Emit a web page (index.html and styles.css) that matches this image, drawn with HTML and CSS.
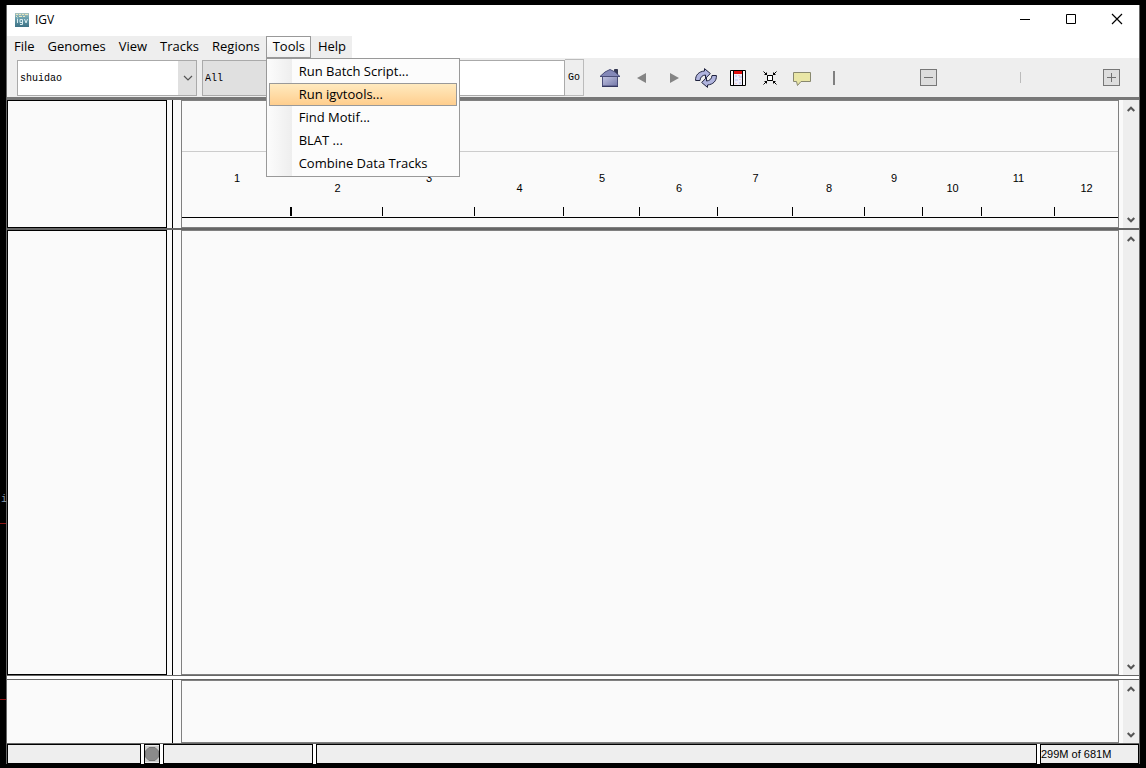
FILE: index.html
```html
<!DOCTYPE html>
<html lang="en">
<head>
<meta charset="utf-8">
<title>IGV</title>
<link rel="stylesheet" href="styles.css">
</head>
<body>
<svg class="defs" width="0" height="0" aria-hidden="true">
  <symbol id="up" viewBox="0 0 8 6"><path d="M.7 5 4 1.700l3.300 3.300" fill="none" stroke="#555" stroke-width="2"/></symbol>
  <symbol id="down" viewBox="0 0 8 6"><path d="M.7 1 4 4.300 7.300 1" fill="none" stroke="#555" stroke-width="2"/></symbol>
</svg>
<span class="stray">i</span>
<i class="mark mark-a"></i>
<i class="mark mark-b"></i>
<div class="window">
  <header class="titlebar">
    <svg class="logo" width="14" height="14" viewBox="0 0 14 14">
      <defs><linearGradient id="lg" x2="0" y2="1"><stop offset="0" stop-color="#a9c4c0"/><stop offset=".35" stop-color="#6aa0ae"/><stop offset="1" stop-color="#3d7285"/></linearGradient></defs>
      <rect width="14" height="14" fill="url(#lg)"/>
      <path d="M1 1.500h2m1 0h2m1 0h2m1 0h3M1 3.500h1m2 0h3m1 0h2" stroke="#e8e6c0"/>
      <path d="M2.500 6v4M2.500 4.500v.8M5 6.500h2.500v5H5M5 6.500v3h2.500M9.500 6l1.500 4 1.500-4" fill="none" stroke="#d8ecf0"/>
    </svg>
    <h1 class="title">IGV</h1>
    <div class="controls">
      <button class="control" aria-label="Minimize"><svg width="12" height="12"><path d="M1 6.500h10" stroke="#000"/></svg></button>
      <button class="control" aria-label="Maximize"><svg width="12" height="12"><path d="M1.500 1.500h9v9h-9z" fill="none" stroke="#000"/></svg></button>
      <button class="control" aria-label="Close"><svg width="12" height="12"><path d="M1 1l10 10M11 1 1 11" stroke="#000" stroke-width="1.200"/></svg></button>
    </div>
  </header>
  <nav class="menubar">
    <ul class="menus">
      <li><button class="menu">File</button></li>
      <li><button class="menu">Genomes</button></li>
      <li><button class="menu">View</button></li>
      <li><button class="menu">Tracks</button></li>
      <li><button class="menu">Regions</button></li>
      <li class="open"><button class="menu active" aria-expanded="true">Tools</button>
        <div class="dropdown">
          <button class="item">Run Batch Script...</button>
          <button class="item selected">Run igvtools...</button>
          <button class="item">Find Motif...</button>
          <button class="item">BLAT ...</button>
          <button class="item">Combine Data Tracks</button>
        </div>
      </li>
      <li><button class="menu">Help</button></li>
    </ul>
  </nav>
  <div class="toolbar">
    <div class="combo genome">
      <select aria-label="Genome"><option>shuidao</option></select>
      <svg class="chevron" width="10" height="6"><path d="M1 1l4 4 4-4" fill="none" stroke="#555" stroke-width="1.200"/></svg>
    </div>
    <div class="combo chromosome">
      <select aria-label="Chromosome"><option>All</option></select>
    </div>
    <input class="locus" type="text" aria-label="Locus">
    <button class="go">Go</button>
    <div class="tools">
      <button class="tool" aria-label="Home"><svg width="22" height="20" viewBox="0 0 22 20">
        <defs><linearGradient id="hg" x2="1" y2="1"><stop offset="0" stop-color="#c2c4e2"/><stop offset="1" stop-color="#7478a8"/></linearGradient></defs>
        <path d="M3.500 8.500h15v9.500h-15z" fill="url(#hg)" stroke="#4a4d78"/>
        <path d="M15.500 5V1.500h3V7" fill="#333653" stroke="#33364f"/>
        <path d="M1 8.500 6 4l5-2.500L16 4l5 4.500z" fill="#8488b8" stroke="#4a4d78"/>
        <path d="M3 18.500h16" stroke="#34375f"/></svg></button>
      <button class="tool" aria-label="Back"><svg width="10" height="10"><path d="M9 0v10L0 5z" fill="#848484"/></svg></button>
      <button class="tool" aria-label="Forward"><svg width="10" height="10"><path d="M1 0v10l9-5z" fill="#848484"/></svg></button>
      <button class="tool" aria-label="Refresh"><svg width="22" height="20" viewBox="0 0 22 20">
        <g fill="#b0b4de" stroke="#20233f"><path d="M.6 12.500C.2 7 4 3.500 9.500 3V.6l5.800 4.900-4.800 4.900V7C7.500 7.200 5.200 9 5 12.500z"/>
        <path d="M21.400 7.500c.4 5.500-3.400 9-8.900 9.500v2.400l-5.800-4.900 4.800-4.900V13c3-.2 5.300-2 5.500-5.500z"/></g></svg></button>
      <button class="tool" aria-label="Region of interest"><svg width="16" height="16" viewBox="0 0 16 16">
        <path d="M.5.500h15v15H.5z" fill="#fff" stroke="#000"/><path d="M4 1h8v3H4z" fill="#e01010"/>
        <path d="M4 4h8v11H4z" fill="#eeeefa"/>
        <path d="M5 5h2v2H5zM9 6h3v2H9zM5 9h3v2H5zM9 12h2v2H9z" fill="#d2d4f4"/><path d="M8 5h2v1H8zM9 9h2v1H9zM5 13h2v1H5z" fill="#f3c6cc"/>
        <path d="M3.500 0v16M12.500 0v16" stroke="#000"/></svg></button>
      <button class="tool" aria-label="Resize tracks"><svg width="14" height="14" viewBox="0 0 14 14">
        <path d="M4.500 4.500h5v5h-5z" fill="#fff" stroke="#000"/>
        <path d="M.5.500l4 4M13.500.500l-4 4M.5 13.500l4-4M13.500 13.500l-4-4M1.500 3.500h2v-2M12.500 3.500h-2v-2M1.500 10.500h2v2M12.500 10.500h-2v2" fill="none" stroke="#000"/></svg></button>
      <button class="tool" aria-label="Popup text"><svg width="20" height="16" viewBox="0 0 20 16">
        <path d="M1.500 2.500h17v9H9L5.500 15.500 4.500 11.500h-3z" fill="#e9e6a6" stroke="#88886e"/></svg></button>
      <span class="rule"></span>
    </div>
    <div class="zoom">
      <button class="step" aria-label="Zoom out"><svg width="15" height="15"><path d="M3 7.500h9" stroke="#707070"/></svg></button>
      <span class="notch"></span>
      <button class="step" aria-label="Zoom in"><svg width="15" height="15"><path d="M3 7.500h9M7.500 3v9" stroke="#707070"/></svg></button>
    </div>
  </div>
  <main class="panels">
    <section class="panel head">
      <div class="names boxed"></div>
      <div class="data">
        <ol class="ruler">
          <li style="flex-grow:110">1</li><li style="flex-grow:91">2</li><li style="flex-grow:92">3</li><li style="flex-grow:89">4</li><li style="flex-grow:76">5</li><li style="flex-grow:78">6</li><li style="flex-grow:75">7</li><li style="flex-grow:72">8</li><li style="flex-grow:58">9</li><li style="flex-grow:59">10</li><li style="flex-grow:73">11</li><li style="flex-grow:63">12</li>
        </ol>
      </div>
      <div class="scroll"><svg width="8" height="6"><use href="#up"/></svg><svg width="8" height="6"><use href="#down"/></svg></div>
    </section>
    <section class="panel tracks">
      <div class="names boxed"></div>
      <div class="data"></div>
      <div class="scroll"><svg width="8" height="6"><use href="#up"/></svg><svg width="8" height="6"><use href="#down"/></svg></div>
    </section>
    <section class="panel features">
      <div class="names"></div>
      <div class="data"></div>
      <div class="scroll"><svg width="8" height="6"><use href="#up"/></svg><svg width="8" height="6"><use href="#down"/></svg></div>
    </section>
  </main>
  <footer class="status">
    <div class="cell position"></div>
    <div class="cell stop"><svg width="14" height="18" viewBox="0 0 14 18"><path d="M0 1h14v16H0z" fill="#ccc"/><path d="M4 2.500h6l3.500 3.500v6L10 15.500H4L.5 12V6z" fill="#8a8a8a" stroke="#777"/></svg></div>
    <div class="cell message"></div>
    <div class="cell detail"></div>
    <div class="cell memory">299M of 681M</div>
  </footer>
</div>
</body>
</html>
```
FILE: styles.css
```css
* { box-sizing: border-box; }
body {
  margin: 0;
  height: 100vh;
  padding: 5px 6px 4px;
  display: flex;
  background: #000;
  color: #000;
  font: 13px/18px "Open Sans", "Noto Sans", sans-serif;
  overflow: hidden;
}
button, select, input { font: inherit; color: inherit; margin: 0; }
button { background: none; border: 0; padding: 0; }
svg { display: block; }
.defs { position: absolute; }
.stray { position: absolute; left: 1px; top: 490px; color: #8899aa; font: 10px/20px "Liberation Mono", monospace; }
.mark { position: absolute; left: 0; width: 6px; height: 1px; background: #8b1414; }
.mark-a { top: 523px; }
.mark-b { top: 699px; }

.window {
  flex: 1;
  min-width: 0;
  display: flex;
  flex-direction: column;
  background: #fff;
  border: solid #666;
  border-width: 0 1px;
}
.titlebar { display: flex; align-items: flex-start; height: 31px; padding-left: 8px; }
.logo { margin-top: 8px; }
.title { margin: 6px 0 0 6px; font-size: 12px; font-weight: 400; }
.controls { display: flex; margin: 0 -1px 0 auto; }
.control { width: 46px; height: 28px; display: grid; place-items: center; }

.menubar { display: flex; }
.menus { display: flex; list-style: none; margin: 0; padding: 0; background: #eee; }
.menu { display: block; height: 22px; padding: 0 6px 2px 7px; }
.active { background: linear-gradient(#fff, #f0f0f0); box-shadow: inset 0 0 0 1px #999; }
.open { position: relative; }
.dropdown {
  position: absolute;
  z-index: 2;
  top: 22px;
  left: 0;
  width: 194px;
  padding: 1px 2px;
  border: 1px solid #999;
  background: linear-gradient(90deg, #fcfcfc, #eee 25px, #fcfcfc 25px);
}
.item { display: block; width: 100%; height: 23px; padding: 0 0 1px 29px; border: 1px solid transparent; text-align: left; }
.selected { border-color: #999; background: linear-gradient(#ffeabf, #ffce8e); }

.toolbar { display: flex; align-items: center; height: 39px; padding-left: 10px; background: #eee; }
.combo { position: relative; height: 36px; border: 1px solid #aaa; background: #e0e0e0; font: 10px "Liberation Mono", monospace; }
.combo select { appearance: none; width: 100%; height: 100%; padding: 1px 2px 0; border: 0; background: transparent; color: #000; }
.genome { width: 180px; padding-right: 18px; background: linear-gradient(#fff, #fff) no-repeat 0 0 / calc(100% - 18px) 100% #e0e0e0; }
.chevron { position: absolute; right: 3px; top: 14px; }
.chromosome { width: 130px; margin-left: 5px; }
.locus { width: 229px; height: 36px; margin-left: 4px; border: 1px solid #aaa; background: #fff; }
.go { width: 19px; height: 37px; border: 1px solid #bbb; border-left: 0; font: 10px "Liberation Mono", monospace; }
.tools { display: flex; align-items: center; margin-left: 10px; }
.tool { width: 32px; height: 28px; display: grid; place-items: center; }
.rule { width: 2px; height: 14px; margin-left: 15px; background: #808080; }
.zoom { display: flex; align-items: center; justify-content: space-between; width: 200px; margin: 0 19px 0 auto; }
.step { width: 17px; height: 17px; border: 1px solid #777; background: #ddd; }
.notch { width: 1px; height: 11px; background: #bbb; }

.panels { flex: 1; min-height: 0; display: flex; flex-direction: column; border-top: 3px solid #777; border-bottom: 1px solid #666; }
.panel { display: flex; background: linear-gradient(#000, #000) no-repeat 165px 0 / 1px 100% #fafafa; }
.names { flex: none; width: 160px; margin-right: 14px; }
.boxed { border: 1px solid #000; }
.data { flex: 1; display: flex; flex-direction: column; justify-content: flex-end; border: 1px solid #808080; }
.scroll { width: 16px; margin-left: 4px; padding: 6px 4px 5px; display: flex; flex-direction: column; justify-content: space-between; background: #eee; }
.head { height: 128px; }
.tracks { flex: 1; border-top: 2px solid #666; border-bottom: 1px solid #666; }
.features { height: 64px; margin-top: 3px; border-top: 1px solid #666; }
.ruler {
  display: flex;
  height: 67px;
  margin: 0 0 9px;
  padding: 0;
  list-style: none;
  border-top: 1px solid #ccc;
  border-bottom: 1px solid #000;
  font: 11px/12px "Liberation Sans", Arial, sans-serif;
  text-align: center;
}
.ruler li { flex: 1 1 0; padding-top: 20px; background: linear-gradient(#000, #000) no-repeat 100% 55px / 1px 9px; }
.ruler li:first-child { background-size: 2px 9px; }
.ruler li:nth-child(even) { padding-top: 30px; }
.ruler li:last-child { background: none; }

.status { display: flex; gap: 3px; height: 20px; }
.cell { border: 1px solid #000; background: #eee; }
.position { width: 134px; }
.stop { width: 16px; }
.message { width: 150px; }
.detail { flex: 1; }
.memory { width: 99px; font: 11px/18px "Liberation Sans", Arial, sans-serif; }
```
